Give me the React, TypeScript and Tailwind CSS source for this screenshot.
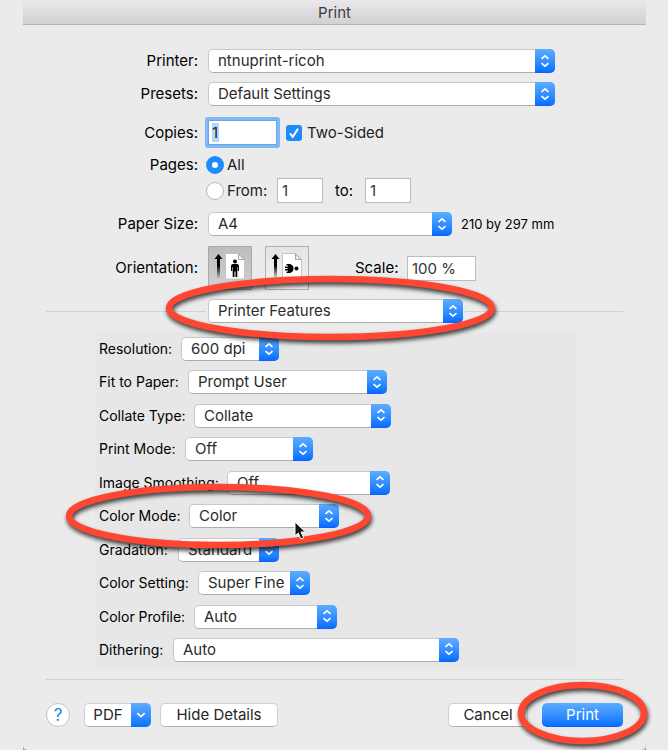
import React from 'react';

interface PopUpProps {
  id: string;
  value: string;
  className?: string;
}

const PopUp: React.FC<PopUpProps> = ({ id, value, className = '' }) => (
  <div className={`relative h-6 ${className}`}>
    <select
      id={id}
      defaultValue={value}
      className="block h-6 w-full appearance-none rounded-[5px] border border-[#c8c8c8] border-b-[#adadad] bg-white pl-[9px] pr-5 text-[15px] leading-5 text-[#2b2b2b] outline-none"
    >
      <option>{value}</option>
    </select>
    <span className="pointer-events-none absolute inset-y-0 right-0 flex w-5 items-center justify-center rounded-r-[5px] border-b border-[#1a5cff] bg-gradient-to-b from-[#5cadff] to-[#0070ff]">
      <svg width="10" height="14" viewBox="0 0 10 14" fill="none" stroke="white" strokeWidth="1.6">
        <path d="M1.5 4.9 L5 1.8 L8.5 4.9 M1.5 9.1 L5 12.2 L8.5 9.1" />
      </svg>
    </span>
  </div>
);

interface RingProps {
  width: number;
  height: number;
  className: string;
}

const Ring: React.FC<RingProps> = ({ width, height, className }) => (
  <svg
    width={width}
    height={height}
    className={`pointer-events-none absolute z-10 overflow-visible [filter:drop-shadow(1px_3px_2px_rgba(0,0,0,0.75))] ${className}`}
  >
    <ellipse cx={width / 2} cy={height / 2} rx={width / 2 - 3} ry={height / 2 - 3} fill="none" stroke="#ff4632" strokeWidth="6.5" />
  </svg>
);

const UpArrow = () => (
  <>
    <defs>
      <linearGradient id="stem" x1="0" y1="0" x2="0" y2="1">
        <stop offset="0.35" stopColor="#000" />
        <stop offset="1" stopColor="#000" stopOpacity="0" />
      </linearGradient>
    </defs>
    <path d="M9.5 7 L13.5 12 H5.5 Z" fill="#000" />
    <rect x="8" y="11" width="3" height="21" fill="url(#stem)" />
  </>
);

const Sheet = () => (
  <>
    <path d="M16.5 6.5 H29.5 L35.5 12.5 V32 H16.5 Z" fill="#fff" stroke="#c4c4c4" />
    <path d="M29.5 7 V12.5 H35.5 Z" fill="#eee" stroke="#a5a5a5" />
  </>
);

const labelClass = 'w-[152px] shrink-0 text-right';
const fieldClass = 'border border-[#bcbcbc] bg-white pl-1 text-[15px] text-[#333] outline-none';
const buttonClass = 'h-6 rounded-[5px] border border-[#cfcfcf] border-b-[#b0b0b0] bg-white text-[15px] leading-5 text-[#262626]';

const features = [
  { id: 'resolution', label: 'Resolution:', value: '600 dpi', labelWidth: 'w-[82px]', width: 'w-[98px]' },
  { id: 'fit', label: 'Fit to Paper:', value: 'Prompt User', labelWidth: 'w-[89px]', width: 'w-[199px]' },
  { id: 'collate', label: 'Collate Type:', value: 'Collate', labelWidth: 'w-[95px]', width: 'w-[197px]' },
  { id: 'mode', label: 'Print Mode:', value: 'Off', labelWidth: 'w-[86px]', width: 'w-[128px]' },
  { id: 'smoothing', label: 'Image Smoothing:', value: 'Off', labelWidth: 'w-[128px]', width: 'w-[163px]' },
  { id: 'color', label: 'Color Mode:', value: 'Color', labelWidth: 'w-[90px]', width: 'w-[150px]', marked: true },
  { id: 'gradation', label: 'Gradation:', value: 'Standard', labelWidth: 'w-[79px]', width: 'w-[101px]' },
  { id: 'setting', label: 'Color Setting:', value: 'Super Fine', labelWidth: 'w-[99px]', width: 'w-[112px]' },
  { id: 'profile', label: 'Color Profile:', value: 'Auto', labelWidth: 'w-[95px]', width: 'w-[143px]' },
  { id: 'dithering', label: 'Dithering:', value: 'Auto', labelWidth: 'w-[74px]', width: 'w-[286px]' },
];

export default function App() {
  return (
    <div className="min-h-screen overflow-hidden bg-[#ebebeb] pl-[23px] pr-[22px] font-['Inter','Liberation_Sans',sans-serif] text-[15px] leading-5 text-black">
      <div className="relative">
        {/* Title bar */}
        <header className="flex h-[25px] items-center justify-center rounded-t-[4px] border-b border-[#b4b2b4] bg-gradient-to-b from-[#eae8ea] to-[#d2d0d2] pt-[2px]">
          <h1 className="text-[15px] leading-5 text-[#3c3c3c]">Print</h1>
        </header>

        <main className="px-[23px] pt-6">
          <div className="flex items-center gap-[10px]">
            <label htmlFor="printer" className={labelClass}>Printer:</label>
            <PopUp id="printer" value="ntnuprint-ricoh" className="max-w-[347px] flex-1" />
          </div>
          <div className="mt-[9px] flex items-center gap-[10px]">
            <label htmlFor="presets" className={labelClass}>Presets:</label>
            <PopUp id="presets" value="Default Settings" className="max-w-[347px] flex-1" />
          </div>

          <div className="mt-[14px] flex items-center">
            <label htmlFor="copies" className={labelClass}>Copies:</label>
            <div className="relative ml-[10px] h-[25px] w-[69px] rounded-[1px] bg-white ring-[3px] ring-[#7fb9f5]">
              <span className="absolute left-1 top-[3px] h-[19px] w-[7px] bg-[#b3d7ff]" />
              <input id="copies" defaultValue="1" className="relative block h-full w-full border border-[#6da6e2] bg-transparent pl-[3px] text-[15px] text-[#222] outline-none" />
            </div>
            <label className="ml-[9px] flex items-center text-[#222]">
              <span className="relative mr-[5px] block size-4">
                <input type="checkbox" defaultChecked className="block size-4 appearance-none rounded-[3px] bg-[#1e8bfb]" />
                <svg viewBox="0 0 16 16" className="pointer-events-none absolute inset-0" fill="none" stroke="white" strokeWidth="2">
                  <path d="M4 8.5 L6.8 11.8 L12 3.8" />
                </svg>
              </span>
              Two-Sided
            </label>
          </div>

          <div className="mt-[10px] flex items-center">
            <span className={labelClass}>Pages:</span>
            <label className="ml-2 flex items-center gap-[3px] text-[#222]">
              <input type="radio" name="pages" defaultChecked className="size-[18px] appearance-none rounded-full border-[6px] border-[#1e8bfb] bg-white" />
              All
            </label>
          </div>
          <div className="mt-[3px] flex items-center">
            <label className="ml-40 flex items-center gap-[3px] text-[#222]">
              <input type="radio" name="pages" className="size-[18px] appearance-none rounded-full border border-[#b8b8b8] bg-white" />
              <span className="w-[50px]">From:</span>
            </label>
            <input aria-label="From page" defaultValue="1" className={`h-[25px] w-[46px] ${fieldClass}`} />
            <label htmlFor="to" className="ml-3 w-[30px]">to:</label>
            <input id="to" defaultValue="1" className={`h-[25px] w-[46px] ${fieldClass}`} />
          </div>

          <div className="mt-[9px] flex items-center">
            <label htmlFor="paper" className={labelClass}>Paper Size:</label>
            <PopUp id="paper" value="A4" className="ml-[10px] w-[244px]" />
            <span className="ml-[9px] text-[13px]">210 by 297 mm</span>
          </div>

          <div className="mt-[10px] flex items-center">
            <span className={labelClass}>Orientation:</span>
            <button aria-label="Portrait" className="ml-[10px] size-11 border border-[#a8a8a8] bg-gradient-to-b from-[#bdbdbd] to-[#d0d0d0]">
              <svg width="42" height="42">
                <UpArrow />
                <Sheet />
                <circle cx="26" cy="14.5" r="2" />
                <path d="M24 17 H28 Q30 17 30 19 V24 H28.8 V20 H28.3 V30 H26.5 V24.5 H25.5 V30 H23.7 V20 H23.2 V24 H22 V19 Q22 17 24 17 Z" />
              </svg>
            </button>
            <button aria-label="Landscape" className="ml-[13px] size-11 border border-[#b0b0b0] bg-gradient-to-b from-[#e4e4e4] to-[#f3f3f3]">
              <svg width="42" height="42">
                <UpArrow />
                <Sheet />
                <path d="M20.5 17 H24 Q27.5 18 27.5 21.5 Q27.5 25 24 26 H20.5 V24.5 H22 V23.6 H19 V22 H21.5 V21 H19 V19.4 H22 V18.5 H20.5 Z" />
                <circle cx="30.5" cy="21.5" r="2" />
              </svg>
            </button>
            <label htmlFor="scale" className="ml-[46px] w-[52px]">Scale:</label>
            <input id="scale" defaultValue="100 %" className={`h-[25px] w-[69px] ${fieldClass}`} />
          </div>

          {/* Pane selector */}
          <div className="mt-[9px] flex items-center">
            <hr className="w-40 border-[#d3d3d3]" />
            <div className="relative ml-[2px]">
              <PopUp id="pane" value="Printer Features" className="w-[255px]" />
              <Ring width={329} height={64} className="-left-[42px] -top-[23px]" />
            </div>
            <hr className="ml-[2px] flex-1 border-[#d3d3d3]" />
          </div>

          <section className="ml-[49px] mr-[47px] mt-[9px] flex min-h-[337px] flex-col justify-between bg-[#e7e7e7] pb-[7px] pl-1 pt-[5px] text-[14px]">
            {features.map((f) => (
              <div key={f.id} className="relative flex items-center">
                <label htmlFor={f.id} className={`shrink-0 whitespace-nowrap ${f.labelWidth}`}>{f.label}</label>
                <PopUp id={f.id} value={f.value} className={f.width} />
                {f.marked && (
                  <>
                    <Ring width={305} height={64} className="-left-[33px] -top-5" />
                    <svg width="14" height="20" viewBox="0 0 14 20" className="pointer-events-none absolute left-[195px] top-[17px] z-20">
                      <path d="M1 1 V15 L4.3 12 L6.8 18 L9.6 16.8 L7 11 H11.5 Z" fill="#111" stroke="#fff" strokeWidth="1" />
                    </svg>
                  </>
                )}
              </div>
            ))}
          </section>

          <hr className="mt-[10px] border-[#d0d0d0]" />

          <footer className="flex items-center pb-[23px] pt-[23px]">
            <button aria-label="Help" className="size-6 rounded-full border border-[#c4c4c4] bg-white text-[17px] leading-5 text-[#1683fb]">?</button>
            <button className="ml-[14px] flex h-6 w-[67px] items-center rounded-[5px] border border-r-0 border-[#cfcfcf] border-b-[#b0b0b0] bg-white text-[#262626]">
              <span className="flex-1">PDF</span>
              <span className="-my-px flex h-6 w-5 items-center justify-center rounded-r-[5px] bg-gradient-to-b from-[#5cadff] to-[#0070ff]">
                <svg width="10" height="8" viewBox="0 0 10 8" fill="none" stroke="white" strokeWidth="1.8">
                  <path d="M1.3 2.2 L5 5.6 L8.7 2.2" />
                </svg>
              </span>
            </button>
            <button className={`ml-[9px] w-[118px] ${buttonClass}`}>Hide Details</button>
            <button className={`ml-auto w-20 ${buttonClass}`}>Cancel</button>
            <div className="relative ml-[14px]">
              <button className="block h-6 w-[81px] rounded-[5px] border-b border-[#1a5cff] bg-gradient-to-b from-[#5cadff] to-[#0070ff] text-[15px] leading-5 text-white">Print</button>
              <Ring width={129} height={62} className="-left-6 -top-[21px]" />
            </div>
          </footer>
        </main>

        {/* Rounded window corners */}
        <svg width="5" height="5" className="absolute bottom-0 left-0"><path d="M0 0 Q0 5 5 5 H0 Z" fill="#a0a0a0" /></svg>
        <svg width="5" height="5" className="absolute bottom-0 right-0"><path d="M5 0 Q5 5 0 5 H5 Z" fill="#a0a0a0" /></svg>
      </div>
    </div>
  );
}
